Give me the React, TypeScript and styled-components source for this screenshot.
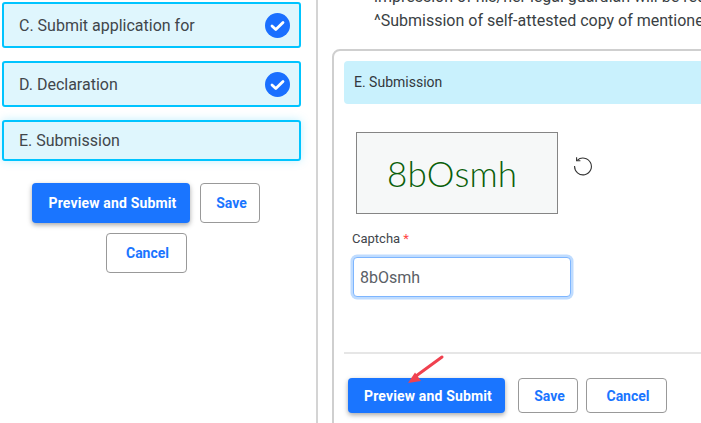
import styled, { createGlobalStyle } from 'styled-components';

const GlobalStyle = createGlobalStyle`
  html, body {
    margin: 0;
    padding: 0;
    height: 100%;
    overflow: hidden;
    background: #fff;
  }
  * {
    box-sizing: border-box;
  }
  body {
    font-family: Roboto, "Liberation Sans", sans-serif;
  }
`;

const Page = styled.div`
  display: flex;
  width: 701px;
  height: 423px;
  overflow: hidden;
`;

const Sidebar = styled.aside`
  flex: 0 0 317px;
  height: 100%;
  padding: 2px 15px 0 2px;
  border-right: 2px solid #d4d4d4;
  display: flex;
  flex-direction: column;
`;

const StepCard = styled.div<{ $active?: boolean }>`
  display: flex;
  align-items: center;
  justify-content: space-between;
  width: 299px;
  height: ${({ $active }) => ($active ? '41px' : '46px')};
  margin-bottom: 13px;
  padding: ${({ $active }) => ($active ? '0 9px 1px 15px' : '0 9px 0 15px')};
  background: #dff6fd;
  border: 2px solid #00c4ff;
  border-radius: 3px;
  font-size: 16px;
  color: #41464b;
  box-shadow: ${({ $active }) => ($active ? '0 0 10px rgba(0, 196, 255, 0.25)' : 'none')};
`;

const CheckBadge = styled.svg`
  width: 25px;
  height: 25px;
  flex: none;
`;

const SideActions = styled.div`
  display: flex;
  flex-wrap: wrap;
  justify-content: center;
  gap: 10px;
  width: 258px;
  margin: 9px 0 0 15px;
`;

const PrimaryButton = styled.button<{ $width?: number; $height?: number }>`
  height: ${({ $height }) => $height ?? 40}px;
  width: ${({ $width }) => $width ?? 158}px;
  border: 0;
  border-radius: 4px;
  background: #1a75ff;
  color: #fff;
  font: 700 14px Roboto, sans-serif;
  letter-spacing: 0.15px;
  box-shadow: 0 2px 5px rgba(0, 0, 0, 0.35);
  padding: 0 0 0 3px;
`;

const OutlineButton = styled.button<{ $width: number; $height?: number }>`
  width: ${({ $width }) => $width}px;
  height: ${({ $height }) => $height ?? 40}px;
  background: #fff;
  border: 1px solid #999;
  border-radius: 4px;
  color: #1a75ff;
  font: 700 14px Roboto, sans-serif;
  padding: 0 0 0 3px;
`;

const Main = styled.main`
  flex: 1;
  min-width: 0;
  padding-left: 14px;
`;

const NoteText = styled.p`
  margin: 0;
  padding-left: 42px;
  font-size: 16px;
  line-height: 24px;
  color: #3a3f44;
  white-space: nowrap;
  &:first-child {
    margin-top: -15px;
  }
`;

const Panel = styled.section`
  width: 420px;
  height: 400px;
  margin-top: 16px;
  padding: 10px 0 0 10px;
  border: 2px solid #cfcfcf;
  border-radius: 8px 0 0 0;
`;

const PanelHeader = styled.div`
  height: 43px;
  display: flex;
  align-items: center;
  padding: 0 0 1px 10px;
  background: #c9f1fd;
  border-radius: 4px 0 0 4px;
  font-size: 14px;
  color: #33383d;
`;

const PanelBody = styled.div`
  height: 250px;
  padding: 28px 0 0 12px;
  border-bottom: 2px solid #e6e6e6;
`;

const CaptchaRow = styled.div`
  display: flex;
  align-items: center;
  gap: 15px;
`;

const CaptchaImage = styled.div`
  width: 202px;
  height: 82px;
  padding: 0 0 0 30px;
  display: flex;
  align-items: center;
  background: #f6f8f8;
  border: 1px solid #858585;
  font-family: Lato, sans-serif;
  font-weight: 300;
  font-size: 35px;
  letter-spacing: 0.2px;
  color: #0a5f0a;
`;

const RefreshIcon = styled.svg`
  width: 20px;
  height: 20px;
  margin-bottom: 14px;
  color: #333;
`;

const FieldLabel = styled.label`
  display: block;
  margin: 17px 0 0 -4px;
  font-size: 13px;
  line-height: 16px;
  color: #41464b;
`;

const Required = styled.span`
  color: #f44;
`;

const CaptchaInput = styled.input`
  display: block;
  width: 218px;
  height: 40px;
  margin: 10px 0 0 -3px;
  padding: 0 6px;
  border: 1px solid #7eb6ff;
  border-radius: 4px;
  box-shadow: 0 0 0 2.5px #bfdcff;
  outline: none;
  font: 400 16px Roboto, sans-serif;
  color: #5a6066;
`;

const PanelActions = styled.div`
  position: relative;
  display: flex;
  align-items: flex-start;
  padding: 24px 0 0 4px;
`;

const SaveButton = styled(OutlineButton)`
  margin: 0 8px 0 13px;
`;

const ArrowMark = styled.svg`
  position: absolute;
  left: 60px;
  top: 0;
  width: 46px;
  height: 32px;
`;

const Check = () => (
  <CheckBadge viewBox="0 0 25 25">
    <circle cx="12.5" cy="12.5" r="12.5" fill="#1a6fff" />
    <path d="M7 13l3.8 3.6L18 9.4" fill="none" stroke="#fff" strokeWidth="2.8" strokeLinecap="round" strokeLinejoin="round" />
  </CheckBadge>
);

export default function App() {
  return (
    <Page>
      <GlobalStyle />
      <Sidebar>
        <StepCard>
          C. Submit application for
          <Check />
        </StepCard>
        <StepCard>
          D. Declaration
          <Check />
        </StepCard>
        <StepCard $active>E. Submission</StepCard>
        <SideActions>
          <PrimaryButton>Preview and Submit</PrimaryButton>
          <OutlineButton $width={60}>Save</OutlineButton>
          <OutlineButton $width={81}>Cancel</OutlineButton>
        </SideActions>
      </Sidebar>
      <Main>
        <NoteText>impression of his/her legal guardian will be required</NoteText>
        <NoteText>^Submission of self-attested copy of mentioned documents</NoteText>
        <Panel>
          <PanelHeader>E. Submission</PanelHeader>
          <PanelBody>
            <CaptchaRow>
              <CaptchaImage>8bOsmh</CaptchaImage>
              <RefreshIcon viewBox="0 0 20 20" fill="none" stroke="currentColor" strokeWidth="1.1">
                <path d="M4.2 4.4A8.4 8.4 0 1 1 1.6 10" />
                <path d="M3.6 1.2v3.6h3.8" />
              </RefreshIcon>
            </CaptchaRow>
            <FieldLabel>
              Captcha <Required>*</Required>
            </FieldLabel>
            <CaptchaInput defaultValue="8bOsmh" />
          </PanelBody>
          <PanelActions>
            <ArrowMark viewBox="0 0 46 32">
              <path d="M38 3L12 22" stroke="#f0414f" strokeWidth="3" strokeLinecap="round" />
              <path d="M4 29l13-2-6-8.5z" fill="#f0414f" />
            </ArrowMark>
            <PrimaryButton $width={157} $height={35}>
              Preview and Submit
            </PrimaryButton>
            <SaveButton $width={60} $height={35}>
              Save
            </SaveButton>
            <OutlineButton $width={81} $height={35}>
              Cancel
            </OutlineButton>
          </PanelActions>
        </Panel>
      </Main>
    </Page>
  );
}
